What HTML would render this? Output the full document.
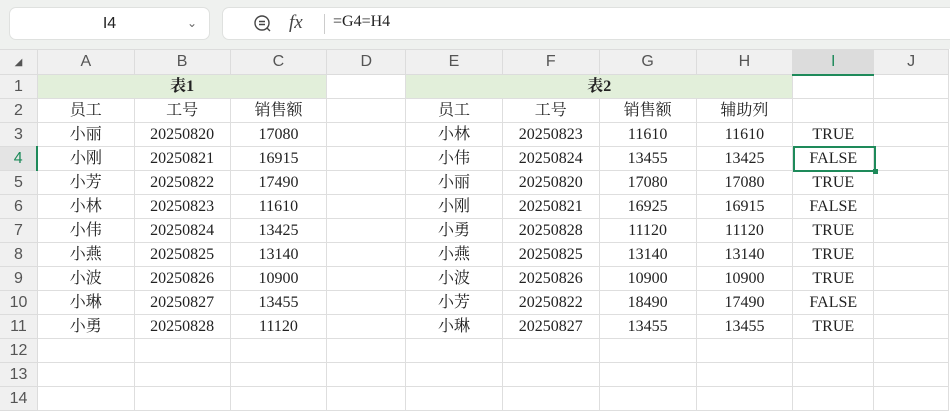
<!DOCTYPE html>
<html><head><meta charset="utf-8"><style>
*{margin:0;padding:0;box-sizing:border-box}
body{width:950px;height:404px;overflow:hidden;background:#fff;position:relative;font-family:"Liberation Serif","Noto Serif CJK SC",serif}
.top{position:absolute;left:0;top:0;width:950px;height:49px;background:#eff1ef}
.nb{position:absolute;left:9px;top:7px;width:201px;height:33px;background:#fff;border:1px solid #dfe1df;border-radius:7px;font:16px "Liberation Sans",sans-serif;color:#222;text-align:center;line-height:31px}
.nb span{position:absolute;right:12px;top:0;color:#666;font-size:12px}
.fb{position:absolute;left:222px;top:7px;width:740px;height:33px;background:#fff;border:1px solid #dfe1df;border-radius:7px}
table{position:absolute;left:-1px;top:49px;border-collapse:collapse;table-layout:fixed}
td{height:24px;border:1px solid #dedede;text-align:center;vertical-align:middle;font-size:16px;line-height:22px;color:#222;padding:0;white-space:nowrap;overflow:hidden}
.c{font-size:16px}
tr.h td{height:25px;background:#f0f0f0;font:16px "Liberation Sans",sans-serif;color:#555;border-color:#dcdcdc}
td.r{background:#f0f0f0;font:16px "Liberation Sans",sans-serif;color:#555;border-color:#dcdcdc}
.g{background:#e2efda;font-weight:bold}
.sel{position:absolute;left:793px;top:146px;width:83px;height:26px;border:2px solid #1e8a5a}
</style></head><body>
<div class="top"></div>
<div class="nb">I4<span>&#8964;</span></div>
<div class="fb">
<svg style="position:absolute;left:30px;top:6px" width="20" height="20" viewBox="0 0 20 20"><circle cx="9" cy="9" r="7" fill="none" stroke="#444" stroke-width="1.4"/><path d="M6 7.5h6M6 10.5h6M14 14l3 3" stroke="#444" stroke-width="1.4"/></svg>
<span style="position:absolute;left:66px;top:4px;font:italic 19px 'Liberation Serif',serif;color:#444">fx</span>
<div style="position:absolute;left:101px;top:6px;width:1px;height:20px;background:#ccc"></div>
<span style="position:absolute;left:110px;top:5px;font-size:16px;color:#222">=G4=H4</span>
</div>
<table>
<colgroup><col style="width:38px"><col style="width:97px"><col style="width:96px"><col style="width:97px"><col style="width:79px"><col style="width:97px"><col style="width:97px"><col style="width:97px"><col style="width:97px"><col style="width:81px"><col style="width:75px"></colgroup>
<tr class="h"><td style="font-size:10px">◢</td><td>A</td><td>B</td><td>C</td><td>D</td><td>E</td><td>F</td><td>G</td><td>H</td><td style="background:#dcdcdc;border-bottom:2px solid #1e8a5a;color:#1e8a5a">I</td><td>J</td></tr>
<tr><td class="r">1</td><td colspan="3" class="g">表1</td><td></td><td colspan="4" class="g">表2</td><td></td><td></td></tr>
<tr><td class="r">2</td><td>员工</td><td>工号</td><td>销售额</td><td></td><td>员工</td><td>工号</td><td>销售额</td><td>辅助列</td><td></td><td></td></tr>
<tr><td class="r">3</td><td>小丽</td><td>20250820</td><td>17080</td><td></td><td>小林</td><td>20250823</td><td>11610</td><td>11610</td><td>TRUE</td><td></td></tr>
<tr><td class="r" style="color:#1e8a5a;background:#e4e4e4;border-right:2px solid #1e8a5a">4</td><td>小刚</td><td>20250821</td><td>16915</td><td></td><td>小伟</td><td>20250824</td><td>13455</td><td>13425</td><td>FALSE</td><td></td></tr>
<tr><td class="r">5</td><td>小芳</td><td>20250822</td><td>17490</td><td></td><td>小丽</td><td>20250820</td><td>17080</td><td>17080</td><td>TRUE</td><td></td></tr>
<tr><td class="r">6</td><td>小林</td><td>20250823</td><td>11610</td><td></td><td>小刚</td><td>20250821</td><td>16925</td><td>16915</td><td>FALSE</td><td></td></tr>
<tr><td class="r">7</td><td>小伟</td><td>20250824</td><td>13425</td><td></td><td>小勇</td><td>20250828</td><td>11120</td><td>11120</td><td>TRUE</td><td></td></tr>
<tr><td class="r">8</td><td>小燕</td><td>20250825</td><td>13140</td><td></td><td>小燕</td><td>20250825</td><td>13140</td><td>13140</td><td>TRUE</td><td></td></tr>
<tr><td class="r">9</td><td>小波</td><td>20250826</td><td>10900</td><td></td><td>小波</td><td>20250826</td><td>10900</td><td>10900</td><td>TRUE</td><td></td></tr>
<tr><td class="r">10</td><td>小琳</td><td>20250827</td><td>13455</td><td></td><td>小芳</td><td>20250822</td><td>18490</td><td>17490</td><td>FALSE</td><td></td></tr>
<tr><td class="r">11</td><td>小勇</td><td>20250828</td><td>11120</td><td></td><td>小琳</td><td>20250827</td><td>13455</td><td>13455</td><td>TRUE</td><td></td></tr>
<tr><td class="r">12</td><td></td><td></td><td></td><td></td><td></td><td></td><td></td><td></td><td></td><td></td></tr>
<tr><td class="r">13</td><td></td><td></td><td></td><td></td><td></td><td></td><td></td><td></td><td></td><td></td></tr>
<tr><td class="r">14</td><td></td><td></td><td></td><td></td><td></td><td></td><td></td><td></td><td></td><td></td></tr>
</table>
<div class="sel"><div style="position:absolute;right:-4px;bottom:-4px;width:5px;height:5px;background:#1e8a5a"></div></div>
</body></html>
